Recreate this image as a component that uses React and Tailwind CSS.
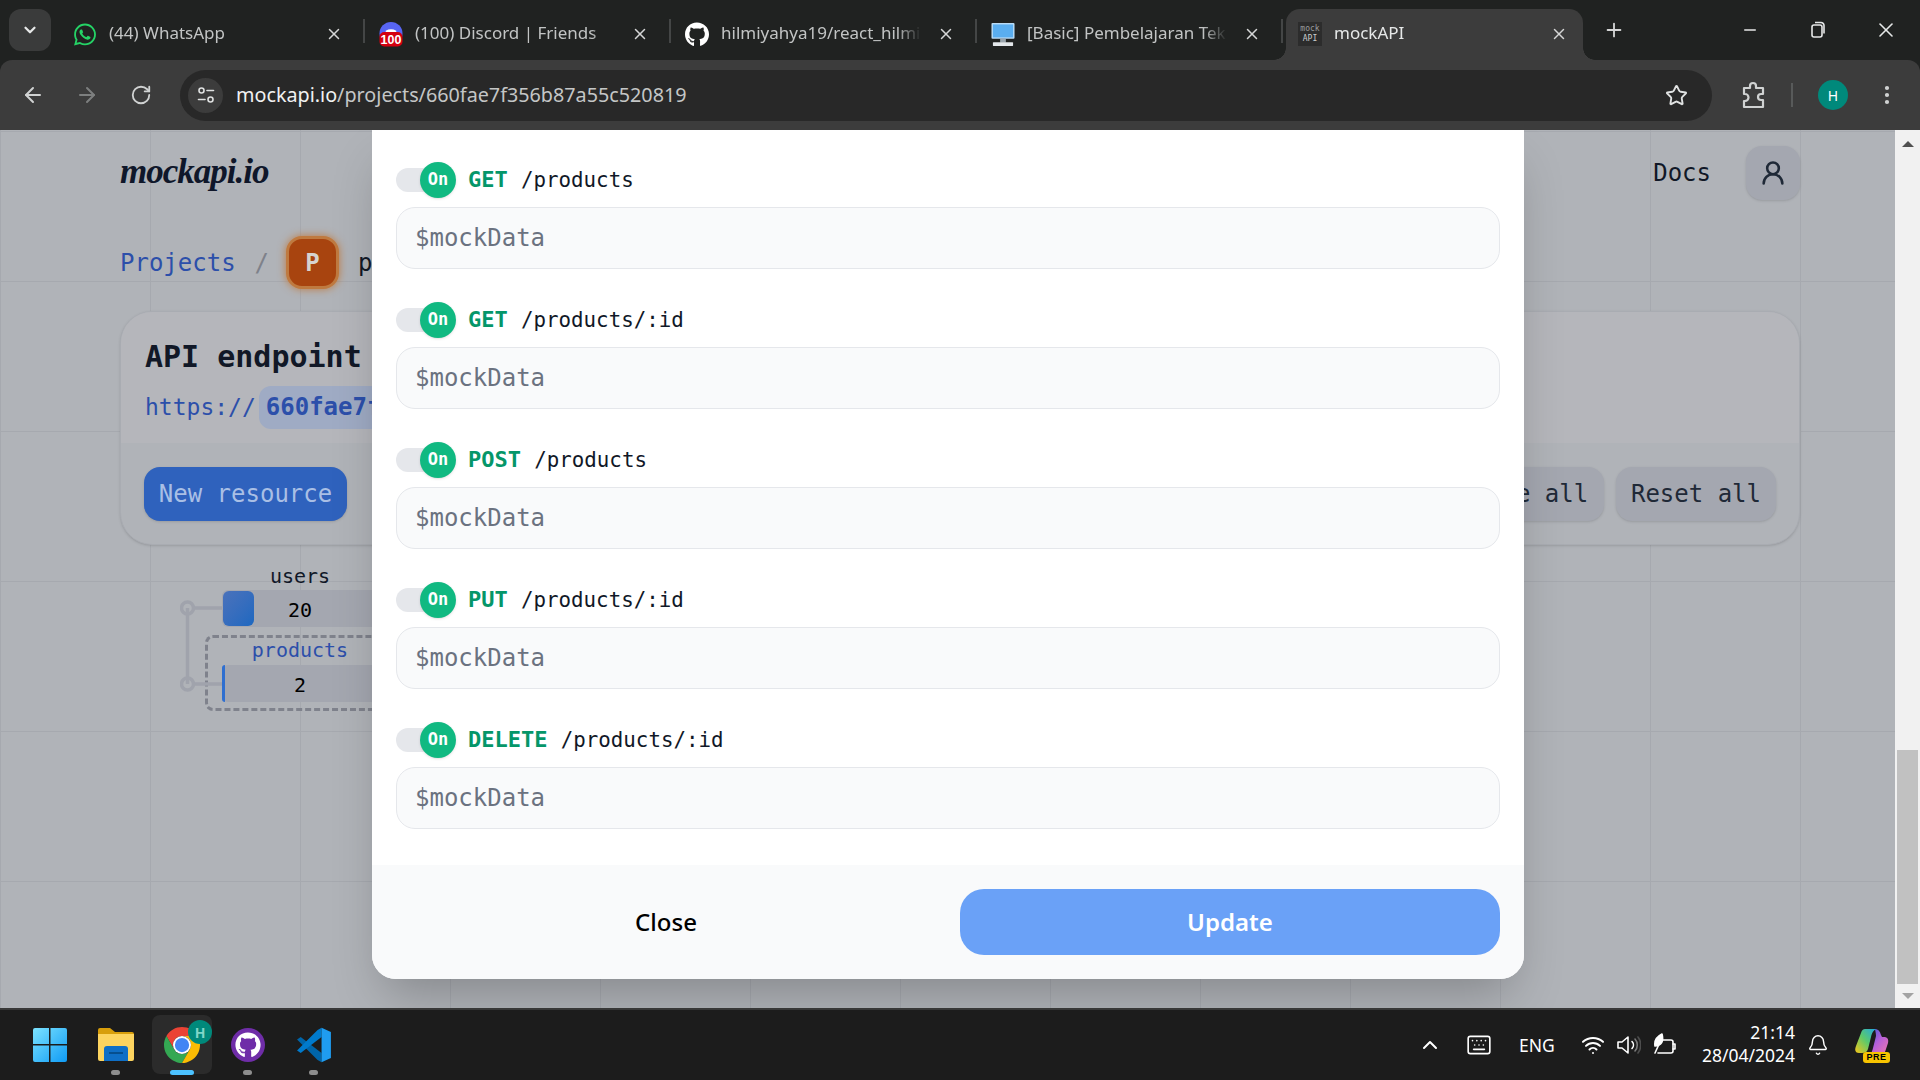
import React from 'react';
import {
  ArrowLeft, ArrowRight, RotateCw, Star, MoreVertical, X, Plus, Minus, ChevronDown, ChevronUp,
  Wifi, Bell, UserRound, Keyboard
} from 'lucide-react';
import { FaWhatsapp, FaGithub } from 'react-icons/fa';

const mono = "font-['DejaVu_Sans_Mono',monospace]";

const endpoints = [
  { method: 'GET', path: '/products' },
  { method: 'GET', path: '/products/:id' },
  { method: 'POST', path: '/products' },
  { method: 'PUT', path: '/products/:id' },
  { method: 'DELETE', path: '/products/:id' },
];

function DiscordIcon() {
  return (
    <svg width="25" height="26" viewBox="0 0 25 26">
      <circle cx="12.5" cy="12.5" r="12" fill="#5865f2" />
      <path d="M7 9.5q5.500-3 11 0v1.500h-11z" fill="#fff" />
      <rect x="0.500" y="11" width="24" height="15" rx="5" fill="#d4000f" />
      <text x="12.500" y="23" textAnchor="middle" fontSize="13" fontWeight="700" fill="#fff" fontFamily="Liberation Sans, sans-serif">100</text>
    </svg>
  );
}

function MonitorIcon() {
  return (
    <svg width="25" height="25" viewBox="0 0 25 25">
      <rect x="0.500" y="0.500" width="24" height="16.500" rx="1" fill="#b9dcf7" />
      <rect x="2" y="2" width="21" height="13.500" fill="#5aaef0" />
      <rect x="9.500" y="17" width="6" height="4" fill="#9aa5ad" />
      <rect x="2" y="20.500" width="21" height="4" rx="0.500" fill="#e3e7ea" />
    </svg>
  );
}

function MockFavicon() {
  return (
    <div className={`w-6 h-6 bg-[#2c2c2c] flex flex-col items-center justify-center text-[#c9cbcc] leading-[10px] text-[8px] ${mono}`}>
      <span className="text-[#9a9c9e]">mock</span>
      <span>API</span>
    </div>
  );
}

function Tab({ icon, title, active }) {
  return (
    <div className="w-[306px] h-full flex items-end shrink-0">
      <div className={`relative w-[297px] h-[51px] flex items-center rounded-t-[14px] ${active ? 'bg-[#3c3c3c] pl-3' : 'pl-[11px]'}`}>
        {active && <div className="absolute -left-3 bottom-0 w-3 h-3 bg-[radial-gradient(circle_at_0_0,transparent_11.5px,#3c3c3c_12px)]" />}
        {active && <div className="absolute -right-3 bottom-0 w-3 h-3 bg-[radial-gradient(circle_at_100%_0,transparent_11.5px,#3c3c3c_12px)]" />}
        <div className="w-6 flex justify-center shrink-0 -mt-[1px]">{icon}</div>
        <div className={`ml-[12px] -mt-[4px] w-[200px] overflow-hidden whitespace-nowrap text-[17px] [mask-image:linear-gradient(90deg,#000_88%,transparent)] ${active ? 'text-[#e6e8e8]' : 'text-[#c2c4c4]'}`}>
          {title}
        </div>
        <X size={18} strokeWidth={2} className="ml-[16px] -mt-[2px] shrink-0 text-[#d5d6d6]" />
      </div>
      {!active && <div className="ml-1 w-[2px] h-6 mb-[17px] bg-[#444646]" />}
    </div>
  );
}

function TabStrip() {
  return (
    <div className="h-[60px] bg-[#202221] flex items-stretch shrink-0 font-['Noto_Sans',sans-serif]">
      <div className="ml-[9px] mt-[9px] w-[42px] h-[42px] rounded-xl bg-[#3a3b3b] flex items-center justify-center">
        <ChevronDown size={18} strokeWidth={3} className="text-[#e6e8e8]" />
      </div>
      <div className="w-[11px]" />
      <Tab title="(44) WhatsApp" icon={<FaWhatsapp size={25} className="text-[#25d366]" />} />
      <Tab title="(100) Discord | Friends" icon={<DiscordIcon />} />
      <Tab title="hilmiyahya19/react_hilmi" icon={<FaGithub size={25} className="text-white" />} />
      <Tab title="[Basic] Pembelajaran Tekn" icon={<MonitorIcon />} />
      <Tab active title="mockAPI" icon={<MockFavicon />} />
      <div className="w-[11px]" />
      <div className="mt-[19px] w-[22px] h-[22px] flex items-center justify-center">
        <Plus size={22} strokeWidth={2} className="text-[#d5d6d6]" />
      </div>
      <div className="ml-auto flex items-start text-[#e6e8e8]">
        <div className="w-[68px] h-[60px] flex items-center justify-center"><Minus size={18} strokeWidth={2} /></div>
        <div className="w-[68px] h-[60px] flex items-center justify-center">
          <svg width="16" height="18" viewBox="0 0 16 18" fill="none" stroke="currentColor" strokeWidth="1.6">
            <rect x="2" y="4" width="10" height="12" rx="2" />
            <path d="M5 1.500h6a3 3 0 0 1 3 3v8" />
          </svg>
        </div>
        <div className="w-[68px] h-[60px] flex items-center justify-center"><X size={24} strokeWidth={1.6} /></div>
      </div>
    </div>
  );
}

function Toolbar() {
  return (
    <div className="h-[70px] bg-[#3c3c3c] rounded-t-xl flex items-center shrink-0 font-['Noto_Sans',sans-serif]">
      <ArrowLeft size={24} strokeWidth={2} className="ml-[21px] text-[#d0d2d2]" />
      <ArrowRight size={24} strokeWidth={2} className="ml-[30px] text-[#7d7f7f]" />
      <RotateCw size={22} strokeWidth={2} className="ml-[31px] text-[#d0d2d2]" />
      <div className="ml-[28px] w-[1532px] h-[51px] rounded-full bg-[#282828] flex items-center pl-[8px] pr-[24px]">
        <div className="w-[35px] h-[35px] rounded-full bg-[#3c3c3c] flex items-center justify-center">
          <svg width="18" height="18" viewBox="0 0 18 18" fill="none" stroke="#dfe1e1" strokeWidth="1.6" strokeLinecap="round">
            <circle cx="4.500" cy="4.500" r="2.500" />
            <path d="M10 4.500h6.500" />
            <circle cx="13.500" cy="13.500" r="2.500" />
            <path d="M1.500 13.500h6.500" />
          </svg>
        </div>
        <div className="ml-[13px] text-[19.75px] whitespace-nowrap text-[#c4c6c6]">
          <span className="text-[#f0f1f1]">mockapi.io</span>/projects/660fae7f356b87a55c520819
        </div>
        <Star size={23} strokeWidth={2} className="ml-auto text-[#e0e2e2]" />
      </div>
      <svg width="26" height="28" viewBox="0 0 26 28" fill="none" stroke="#d0d2d2" strokeWidth="2.2" strokeLinejoin="round" className="ml-[29px]">
        <path d="M3 7h6V5a3 3 0 0 1 6 0v2h7v6h-2a3 3 0 0 0 0 6h2v7H3v-6h1a3.500 3.500 0 0 0 0-7H3z" />
      </svg>
      <div className="ml-[24px] w-[2px] h-6 bg-[#585a5a]" />
      <div className="ml-[25px] w-[30px] h-[30px] rounded-full bg-[#00897b] text-white text-[14px] flex items-center justify-center">H</div>
      <MoreVertical size={24} strokeWidth={2.2} className="ml-[27px] text-[#d0d2d2]" />
    </div>
  );
}

function GrayButton({ children, width }) {
  return (
    <button className={`h-[54px] ${width} rounded-2xl bg-[#a4a7b0] text-[24px] text-[#1f2937] shadow-sm whitespace-nowrap ${mono}`}>
      {children}
    </button>
  );
}

function ResourceTree() {
  return (
    <div className={`relative ml-[102px] mt-[17px] w-[156px] text-[20px] ${mono}`}>
      <svg width="44" height="96" viewBox="0 0 44 96" fill="none" stroke="#a0a3ac" strokeWidth="3.5" className="absolute -left-[42px] top-[38px] z-10">
        <path d="M7.500 8V84M14 8H42M14 84H42" />
        <circle cx="7.500" cy="8" r="6" />
        <circle cx="7.500" cy="84" r="6" />
      </svg>
      <div className="h-7 leading-7 text-center text-[#111827]">users</div>
      <div className="relative h-[37px] leading-[41px] text-center bg-[#a4a7b0] rounded-l-md text-black">
        <div className="absolute left-[1px] top-[1px] w-[31px] h-[35px] rounded-md bg-gradient-to-br from-[#4a72bb] to-[#1c68c0]" />
        20
      </div>
      <div className="-mx-[17px] mt-2 h-[76px] pl-[14px] pr-[14px] border-[3px] border-dashed border-[#7f828c] rounded-lg">
        <div className="h-[27px] leading-[25px] text-center text-[#2c4faa]">products</div>
        <div className="relative h-[37px] leading-[41px] text-center bg-[#a4a7b0] rounded-l-md text-black">
          <div className="absolute left-0 top-0 w-[3px] h-full rounded-l-md bg-[#2f6fd0]" />
          2
        </div>
      </div>
    </div>
  );
}

function BackgroundPage() {
  return (
    <div className={`flex-1 min-w-0 overflow-hidden bg-[#b0b3b8] bg-[linear-gradient(#a6a9af_1px,transparent_1px),linear-gradient(90deg,#a6a9af_1px,transparent_1px)] bg-[size:150px_150px] bg-[position:0_1px] pl-[120px] pr-[95px] pt-4 ${mono}`}>
      <div className="flex items-center justify-between h-[54px]">
        <div className="-mt-[4px] font-['Liberation_Serif',serif] font-bold italic text-[35px] leading-none text-[#0f172a] tracking-[-1px]">mockapi.io</div>
        <div className="flex items-center">
          <span className="text-[24px] text-[#111827]">Docs</span>
          <div className="ml-[35px] w-[54px] h-[54px] rounded-2xl bg-[#a4a7b0] shadow-sm flex items-center justify-center">
            <UserRound size={28} strokeWidth={2.2} className="text-[#1f2937]" />
          </div>
        </div>
      </div>

      <div className="mt-9 flex items-center h-[53px] text-[24px]">
        <span className="text-[#2c4faa]">Projects</span>
        <span className="ml-[19px] text-[#7e818a]">/</span>
        <div className="ml-[17px] w-[53px] h-[53px] rounded-2xl bg-[#a8440f] border-[3px] border-[#bf7a40] shadow-[0_0_8px_#bf7a40] text-[#d6d3cf] font-bold flex items-center justify-center">P</div>
        <span className="ml-[19px] text-[#111827]">products</span>
      </div>

      <div className="mt-[22px] h-[234px] rounded-[32px] bg-[#b0b3b8] shadow-sm overflow-hidden border border-[#a9acb2]">
        <div className="h-[131px] bg-[#b5b6bb] pl-6 pt-6">
          <div className="text-[30px] leading-[42px] font-semibold text-[#111827]">API endpoint</div>
          <div className="mt-[8px] flex items-center text-[23px] text-[#2c4faa]">
            https://
            <span className="ml-[3px] h-[43px] px-[7px] text-[24px] leading-[43px] rounded-xl bg-[#9fabc4] font-bold">660fae7f356b87a55c520818.mockapi.io</span>
          </div>
        </div>
        <div className="flex items-center justify-between pl-[23px] pr-[23px] pt-6">
          <button className="h-[54px] w-[203px] rounded-2xl bg-[#2f62bd] text-[24px] text-[#a9bfe5] shadow-sm whitespace-nowrap">New resource</button>
          <div className="flex gap-3">
            <GrayButton width="w-[205px]">Generate all</GrayButton>
            <GrayButton width="w-[160px]">Reset all</GrayButton>
          </div>
        </div>
      </div>

      <ResourceTree />
    </div>
  );
}

function EndpointRow({ method, path }) {
  return (
    <div className="mb-[33px]">
      <div className="flex items-center h-9">
        <div className="relative w-12 h-6 rounded-full bg-[#e5e7eb]">
          <div className="absolute left-6 -top-1.5 w-9 h-9 rounded-full bg-[#10b981] shadow-sm text-white font-bold text-[17px] flex items-center justify-center">On</div>
        </div>
        <div className="ml-6 flex items-baseline whitespace-nowrap">
          <span className="text-[22px] font-bold text-[#059669]">{method}</span>
          <span className="text-[22px]">&nbsp;</span>
          <span className="text-[20.8px] text-[#111827]">{path}</span>
        </div>
      </div>
      <input
        readOnly
        placeholder="$mockData"
        className="mt-[9px] block w-full h-[62px] px-[18px] rounded-[19px] bg-[#f9fafb] border border-[#e5e7eb] text-[24px] outline-none placeholder:text-[#6b7280]"
      />
    </div>
  );
}

function Modal() {
  return (
    <div className="absolute left-[372px] top-0 w-[1152px] h-[849px] rounded-b-3xl bg-white shadow-2xl overflow-hidden flex flex-col">
      <div className={`flex-1 px-6 pt-8 ${mono}`}>
        {endpoints.map((e, i) => <EndpointRow key={i} method={e.method} path={e.path} />)}
      </div>
      <div className="grid grid-cols-2 gap-6 p-6 bg-[#f9fafb] font-['Noto_Sans',sans-serif] text-[24px] font-medium">
        <button className="h-[66px] rounded-3xl text-black">Close</button>
        <button className="h-[66px] rounded-3xl bg-[#6aa1f7] text-white font-semibold">Update</button>
      </div>
    </div>
  );
}

function Scrollbar() {
  return (
    <div className="relative w-[25px] shrink-0 bg-[#f1f1f1] flex flex-col items-center">
      <div className="mt-[11px] w-0 h-0 border-x-[6px] border-x-transparent border-b-[6px] border-b-[#505050]" />
      <div className="mt-[603px] w-[21px] h-[234px] bg-[#c1c1c1]" />
      <div className="mt-[9px] w-0 h-0 border-x-[6px] border-x-transparent border-t-[6px] border-t-[#a3a3a3]" />
    </div>
  );
}

function WindowsLogo() {
  return (
    <svg width="36" height="36" viewBox="0 0 36 36">
      <defs>
        <linearGradient id="win" x1="0" y1="0" x2="1" y2="1">
          <stop offset="0" stopColor="#7ce3ff" />
          <stop offset="1" stopColor="#0f9bf5" />
        </linearGradient>
      </defs>
      <path fill="url(#win)" d="M1 3a2 2 0 0 1 2-2h14v16H1zM18.500 1H33a2 2 0 0 1 2 2v14H18.500zM1 18.500h16V35H3a2 2 0 0 1-2-2zM18.500 18.500H35V33a2 2 0 0 1-2 2H18.500z" />
    </svg>
  );
}

function FolderIcon() {
  return (
    <svg width="36" height="34" viewBox="0 0 36 34">
      <path d="M0 2a2 2 0 0 1 2-2h10l5 4h17a2 2 0 0 1 2 2v6H0z" fill="#d89e0b" />
      <path d="M0 6h36v25a2 2 0 0 1-2 2H2a2 2 0 0 1-2-2z" fill="#fdd45f" />
      <path d="M6 33v-12a3 3 0 0 1 3-3h18a3 3 0 0 1 3 3v12z" fill="#0f6fc6" />
      <rect x="11" y="24" width="14" height="2" fill="#064f8f" />
    </svg>
  );
}

function ChromeIcon() {
  return (
    <svg width="36" height="36" viewBox="0 0 48 48">
      <path d="M24 12H44.780A24 24 0 0 0 3.220 12L13.600 30A12 12 0 0 1 24 12Z" fill="#ea4335" />
      <path d="M13.600 30L3.220 12A24 24 0 0 0 24 48L34.400 30A12 12 0 0 1 13.600 30Z" fill="#34a853" />
      <path d="M34.400 30L24 48A24 24 0 0 0 44.780 12H24A12 12 0 0 1 34.400 30Z" fill="#fbbc04" />
      <circle cx="24" cy="24" r="12" fill="#fff" />
      <circle cx="24" cy="24" r="9.500" fill="#4285f4" />
    </svg>
  );
}

function VSCodeIcon() {
  return (
    <svg width="36" height="36" viewBox="0 0 100 100">
      <path d="M3 35L13 28L71 72V98L60 92Z" fill="#0065a9" />
      <path d="M3 65L13 72L71 28V2L60 8Z" fill="#007acc" />
      <path d="M71 2L97 14V86L71 98Z" fill="#1f9cf0" />
    </svg>
  );
}

function CopilotIcon() {
  return (
    <div className="relative w-[35px] h-[35px]">
      <svg width="34" height="30" viewBox="0 0 34 30" className="absolute left-0 top-0">
        <defs>
          <linearGradient id="cpa" x1="0" y1="1" x2="1" y2="0">
            <stop offset="0" stopColor="#f5c518" />
            <stop offset="0.5" stopColor="#5cc96b" />
            <stop offset="1" stopColor="#1ea7e8" />
          </linearGradient>
          <linearGradient id="cpb" x1="0" y1="0" x2="1" y2="1">
            <stop offset="0" stopColor="#2a5bd7" />
            <stop offset="0.5" stopColor="#b65fd8" />
            <stop offset="1" stopColor="#f47aa8" />
          </linearGradient>
        </defs>
        <path d="M10 1h12c-4 1-5 4-6 8l-3 12c-1 3-3 4-6 4H4C1 25-1 23 1 18L6 5C7 2 8 1 10 1z" fill="url(#cpa)" />
        <path d="M20 1c3 0 5 2 6 6l1 2h2c3 0 5 2 4 6l-3 9c-1 3-3 4-6 4H12c4-1 5-4 6-8l3-12c0-3-1-6-1-7z" fill="url(#cpb)" />
      </svg>
      <div className="absolute right-0 bottom-0 w-[27px] h-[11px] rounded-[3px] bg-[#f8c400] text-black text-[9px] leading-[11px] font-bold text-center tracking-[0.5px] font-['Liberation_Sans',sans-serif]">PRE</div>
    </div>
  );
}

function TaskSlot({ children, hover, bar }) {
  return (
    <div className="relative w-[66px] h-full flex items-center justify-center">
      {hover && <div className="absolute left-[3px] top-[5px] w-[60px] h-[59px] rounded-lg bg-[#2b2b2b]" />}
      <div className="relative">{children}</div>
      {bar === 'dot' && <div className="absolute left-[28px] bottom-[5px] w-[9px] h-[5px] rounded-full bg-[#8e8e8e]" />}
      {bar === 'active' && <div className="absolute left-[21px] bottom-[5px] w-6 h-[5px] rounded-full bg-[#4cc2ff]" />}
    </div>
  );
}

function Taskbar() {
  return (
    <div className="h-[72px] shrink-0 bg-[#1c1c1c] border-t-2 border-[#383838] flex items-stretch text-white font-['Noto_Sans',sans-serif]">
      <div className="ml-[17px] flex">
        <TaskSlot><WindowsLogo /></TaskSlot>
        <TaskSlot bar="dot"><FolderIcon /></TaskSlot>
        <TaskSlot hover bar="active">
          <ChromeIcon />
          <div className="absolute -right-3 -top-[7px] w-6 h-6 rounded-full bg-[#00897b] text-[#7fd6c8] text-[14px] font-bold flex items-center justify-center">H</div>
        </TaskSlot>
        <TaskSlot bar="dot">
          <div className="w-[34px] h-[34px] rounded-full bg-[#6f2da8] flex items-center justify-center">
            <FaGithub size={26} className="text-white" />
          </div>
        </TaskSlot>
        <TaskSlot bar="dot"><VSCodeIcon /></TaskSlot>
      </div>

      <div className="ml-auto pr-[30px] flex items-center">
        <ChevronUp size={24} strokeWidth={2} />
        <Keyboard size={26} strokeWidth={1.5} className="ml-6" />
        <span className="ml-[27px] w-[34px] text-[17.5px] text-center">ENG</span>
        <Wifi size={24} strokeWidth={2} className="ml-7" />
        <svg width="24" height="24" viewBox="0 0 24 24" fill="none" stroke="currentColor" strokeWidth="1.6" strokeLinecap="round" strokeLinejoin="round" className="ml-3">
          <path d="M1 9v6h4l6 5V4L5 9z" />
          <path d="M15 8.500a5 5 0 0 1 0 7" />
          <path d="M18 6a9 9 0 0 1 0 12" stroke="#7b7b7b" />
          <path d="M21 4a13 13 0 0 1 0 16" stroke="#4d4d4d" />
        </svg>
        <svg width="24" height="24" viewBox="0 0 24 24" fill="none" stroke="currentColor" strokeWidth="1.6" strokeLinecap="round" strokeLinejoin="round" className="ml-3">
          <path d="M9 7h9a2 2 0 0 1 2 2v9a2 2 0 0 1-2 2H5" />
          <path d="M20 11h2v5h-2" />
          <path d="M2 13C1 7 5 3 9 1c1 4 1 9-3 11-1 1-3 1-4 1z" fill="currentColor" />
          <path d="M2 20L7 9" />
        </svg>
        <div className="ml-2 mb-[3px] w-[110px] text-right text-[17.5px] leading-[23px]">
          <div>21:14</div>
          <div>28/04/2024</div>
        </div>
        <Bell size={22} strokeWidth={1.6} className="ml-3" />
        <div className="ml-[26px]"><CopilotIcon /></div>
      </div>
    </div>
  );
}

export default function App() {
  return (
    <div className="w-[1920px] h-[1080px] flex flex-col overflow-hidden bg-[#202221]">
      <TabStrip />
      <Toolbar />
      <div className="relative flex-1 min-h-0 flex overflow-hidden">
        <BackgroundPage />
        <Scrollbar />
        <Modal />
      </div>
      <Taskbar />
    </div>
  );
}
